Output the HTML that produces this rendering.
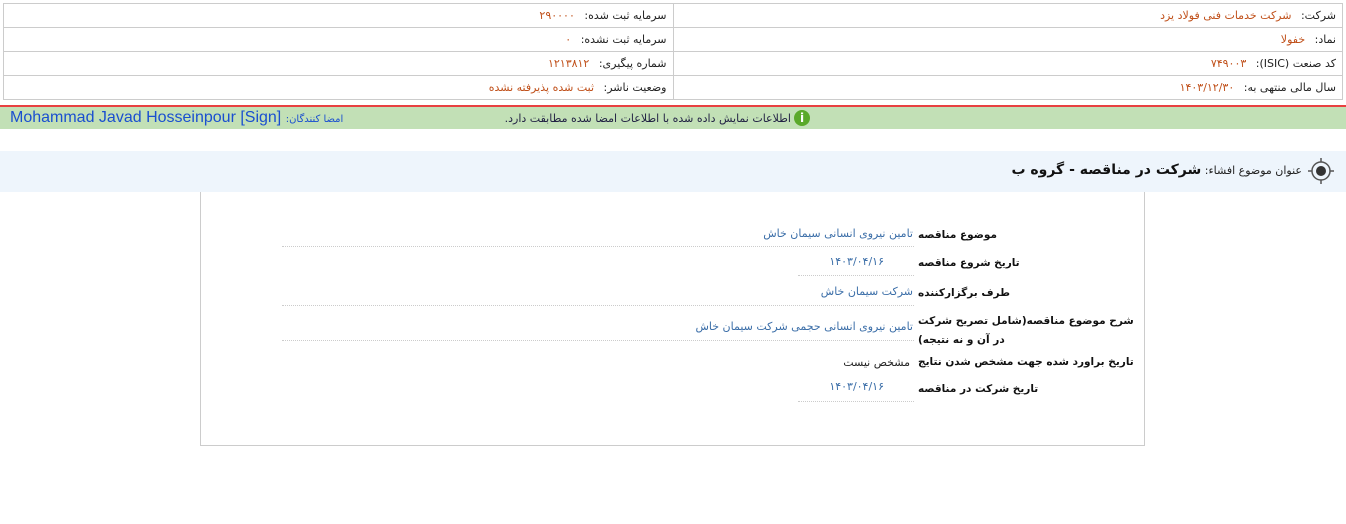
<!DOCTYPE html>
<html><head><meta charset="utf-8"><style>
body{margin:0;background:#fff;font-family:"DejaVu Sans","Liberation Sans",sans-serif;font-size:11px;direction:rtl}
.t{position:absolute;left:3px;top:3px;width:1340px;border-collapse:collapse}
.t td{border:1px solid #ccc;height:23px;padding:0 6px;font-size:11px;color:#222;width:50%}
.v{color:#c0501a;margin-right:6px}
.red{position:absolute;left:0;top:105px;width:1346px;height:2px;background:#e84040}
.grn{position:absolute;left:0;top:107px;width:1346px;height:22px;background:#c2e0b6}
.ttl{position:absolute;left:0;top:151px;width:1346px;height:41px;background:#eef5fc}
.box{position:absolute;left:200px;top:192px;width:943px;height:253px;border:1px solid #ccc;border-top:none}
.r{position:absolute;font-size:11px;white-space:nowrap}
.lab{font-weight:bold;color:#111;left:918px;font-size:10.5px}
.val{color:#3b6ea8}
.dl{position:absolute;border-bottom:1px dotted #ccc;height:0}
</style></head><body>
<table class="t">
<tr><td>شرکت: <span class="v">شرکت خدمات فنی فولاد یزد</span></td><td>سرمایه ثبت شده: <span class="v">۲۹۰۰۰۰</span></td></tr>
<tr><td>نماد: <span class="v">خفولا</span></td><td>سرمایه ثبت نشده: <span class="v">۰</span></td></tr>
<tr><td>کد صنعت (ISIC): <span class="v">۷۴۹۰۰۳</span></td><td>شماره پیگیری: <span class="v">۱۲۱۳۸۱۲</span></td></tr>
<tr><td>سال مالی منتهی به: <span class="v">۱۴۰۳/۱۲/۳۰</span></td><td>وضعیت ناشر: <span class="v">ثبت شده پذیرفته نشده</span></td></tr>
</table>
<div class="red"></div>
<div class="grn">
<div style="position:absolute;right:536px;top:3px;color:#224;font-size:11px;display:flex;align-items:center;gap:3px"><span style="display:inline-block;width:16px;height:16px;border-radius:50%;background:#5aa92a;color:#fff;font-weight:bold;text-align:center;line-height:16px;font-size:12px">i</span>اطلاعات نمایش داده شده با اطلاعات امضا شده مطابقت دارد.</div>
<div style="position:absolute;left:10px;top:2px;direction:ltr;font-size:16px;color:#1a4fd0;font-family:'Liberation Sans',sans-serif">Mohammad Javad Hosseinpour [Sign] <span style="font-size:10px;font-family:'DejaVu Sans',sans-serif">:امضا کنندگان</span></div>
</div>
<div class="ttl">
<svg style="position:absolute;right:10px;top:5px" width="30" height="30" viewBox="0 0 30 30"><circle cx="15" cy="15" r="9" fill="none" stroke="#555" stroke-width="1.5"/><circle cx="15" cy="15" r="5" fill="#333"/><path d="M15 2v4M15 24v4M2 15h4M24 15h4" stroke="#555" stroke-width="1.5"/></svg>
<div style="position:absolute;right:44px;top:11px;font-size:11px;color:#222">عنوان موضوع افشاء: <b style="font-size:14px;color:#111">شرکت در مناقصه - گروه ب</b></div>
</div>
<div class="box"></div>
<div class="r lab" style="top:229px">موضوع مناقصه</div>
<div class="r val" style="right:433px;top:227px">تامین نیروی انسانی سیمان خاش</div>
<div class="dl" style="left:282px;width:632px;top:246px"></div>
<div class="r lab" style="top:257px">تاریخ شروع مناقصه</div>
<div class="r val" style="right:462px;top:255px">۱۴۰۳/۰۴/۱۶</div>
<div class="dl" style="left:798px;width:116px;top:275px"></div>
<div class="r lab" style="top:287px">طرف برگزارکننده</div>
<div class="r val" style="right:433px;top:285px">شرکت سیمان خاش</div>
<div class="dl" style="left:282px;width:632px;top:305px"></div>
<div class="r lab" style="top:312px;width:224px;white-space:normal;line-height:19px;text-align:left">شرح موضوع مناقصه(شامل تصریح شرکت در آن و نه نتیجه)</div>
<div class="r val" style="right:433px;top:320px">تامین نیروی انسانی حجمی شرکت سیمان خاش</div>
<div class="dl" style="left:282px;width:632px;top:340px"></div>
<div class="r lab" style="top:356px">تاریخ براورد شده جهت مشخص شدن نتایج</div>
<div class="r" style="right:436px;top:356px;color:#222">مشخص نیست</div>
<div class="r lab" style="top:383px">تاریخ شرکت در مناقصه</div>
<div class="r val" style="right:462px;top:380px">۱۴۰۳/۰۴/۱۶</div>
<div class="dl" style="left:798px;width:116px;top:401px"></div>
</body></html>
